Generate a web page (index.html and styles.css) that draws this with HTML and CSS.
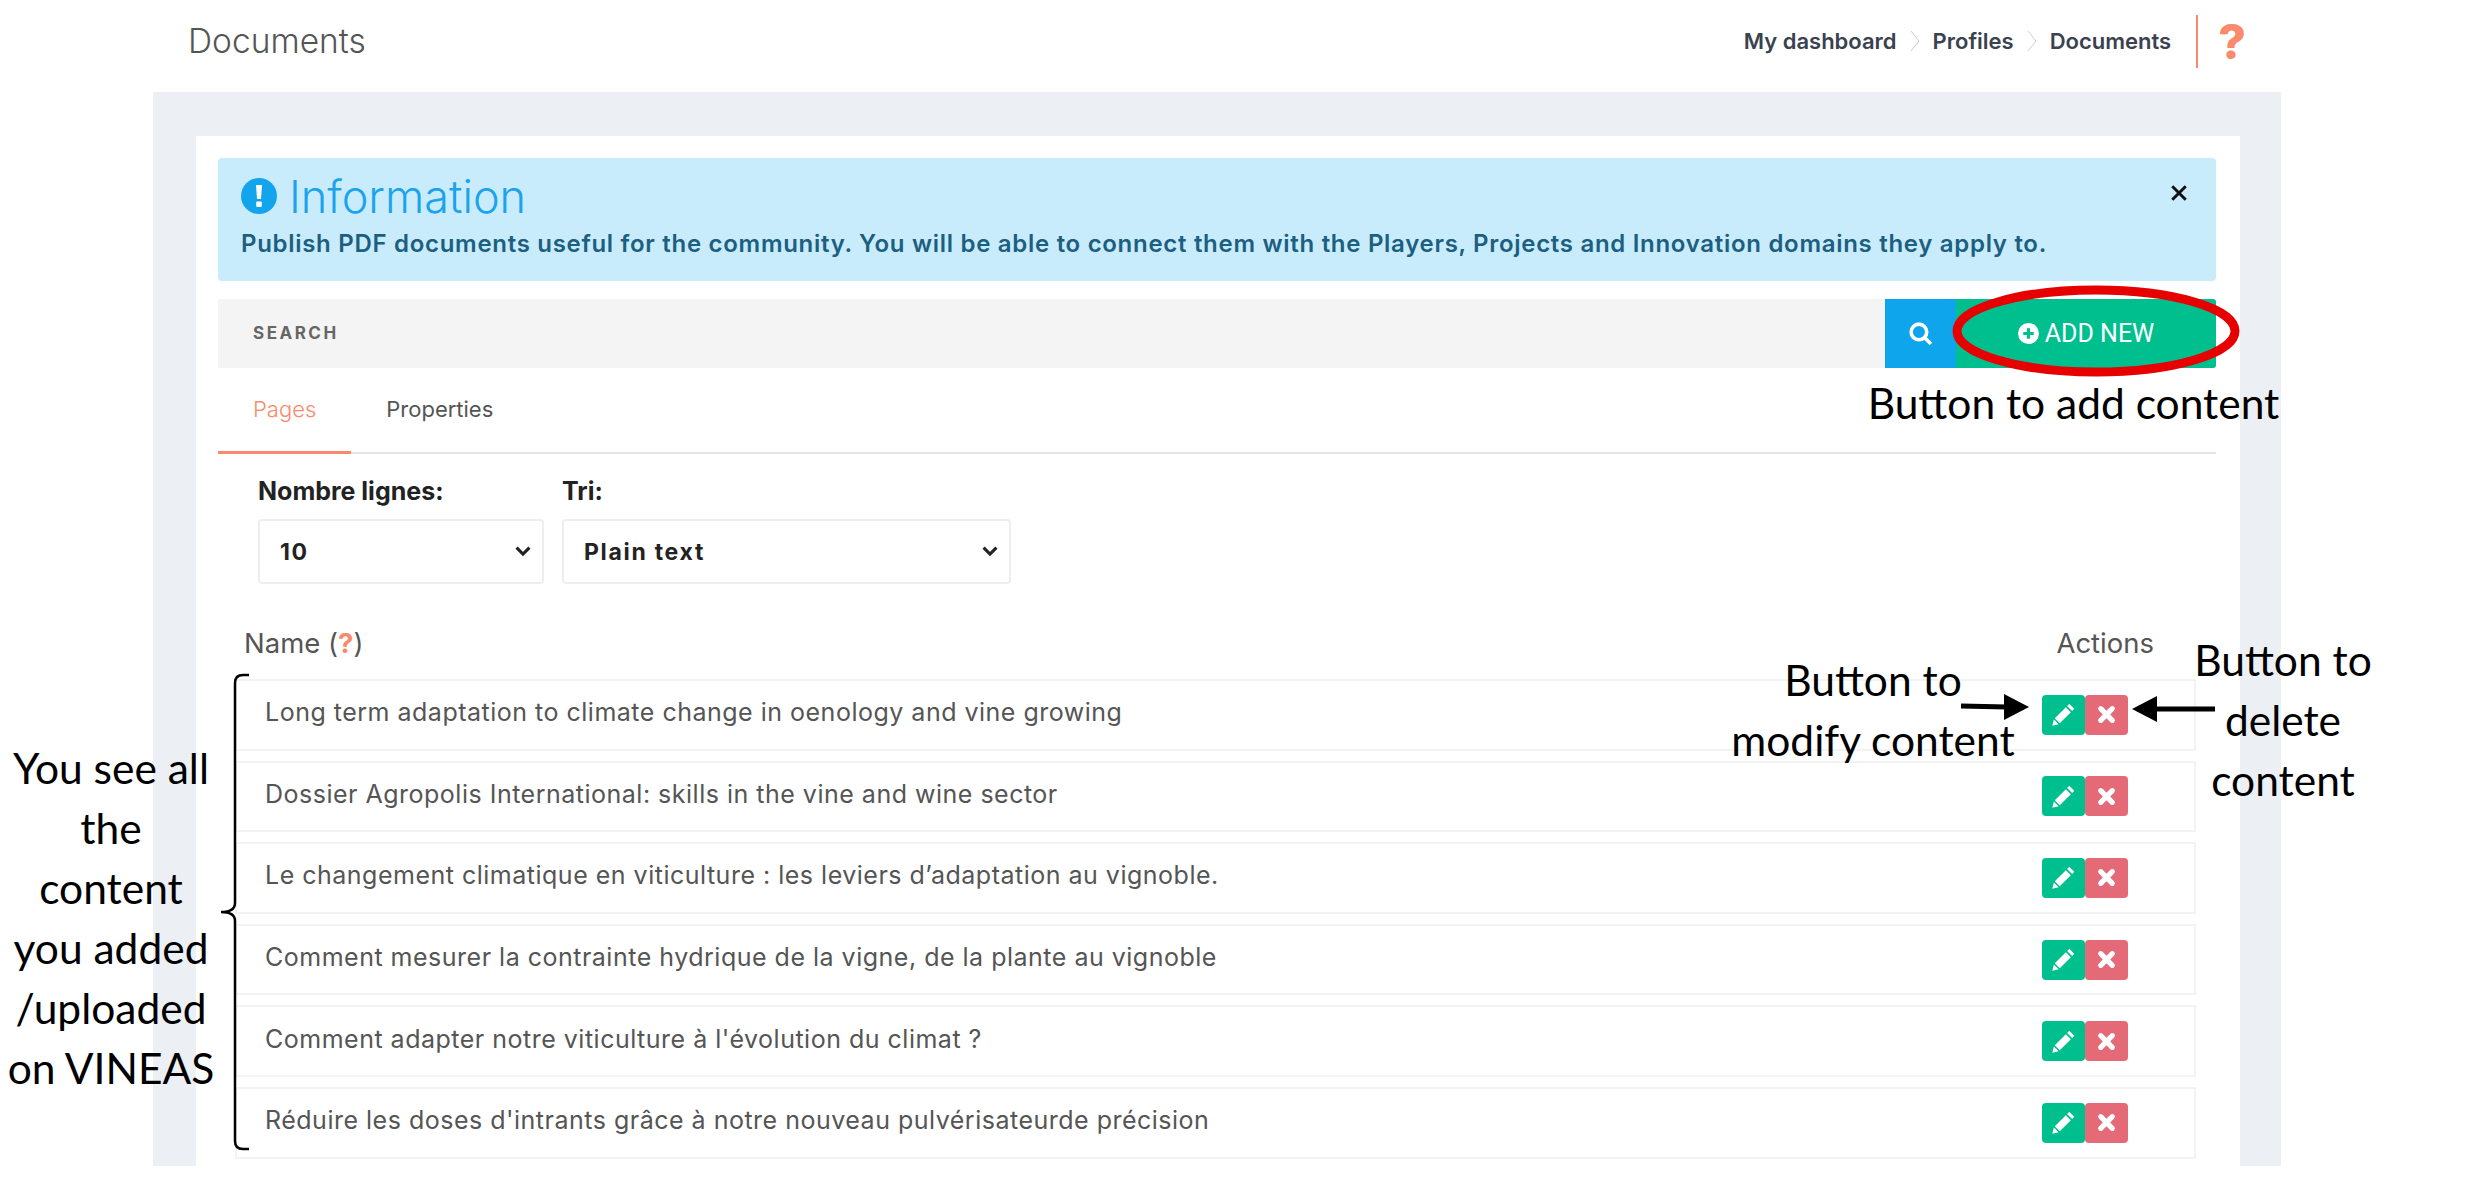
FILE: index.html
```html
<!DOCTYPE html>
<html lang="en">
<head>
    <meta charset="UTF-8">
    <meta name="viewport" content="width=device-width, initial-scale=1.0">
    <title>Documents</title>
    <link rel="stylesheet" href="styles.css">
</head>
<body>
    <header class="topbar">
        <div class="page-title">Documents</div>
        <nav class="breadcrumb">
            <span>My dashboard</span>
            <svg class="crumb-sep" viewBox="0 0 10 24"><path d="M1 2l8 10-8 10" /></svg>
            <span>Profiles</span>
            <svg class="crumb-sep" viewBox="0 0 10 24"><path d="M1 2l8 10-8 10" /></svg>
            <span>Documents</span>
            <span class="help-mark">?</span>
        </nav>
    </header>

    <main class="panel">
        <div class="card">
            <section class="alert">
                <div class="alert-head">
                    <svg class="alert-icon" viewBox="0 0 36 36">
                        <circle cx="18" cy="18" r="18" fill="#12a5ee" />
                        <path d="M15 7h6l-1 14h-4z" fill="#fff" />
                        <rect x="15.2" y="23.5" width="5.6" height="5.6" rx="1" fill="#fff" />
                    </svg>
                    <h2>Information</h2>
                    <svg class="alert-close" viewBox="0 0 16 16"><path d="M2 2l12 12M14 2L2 14" /></svg>
                </div>
                <p>Publish PDF documents useful for the community. You will be able to connect them with the Players, Projects and Innovation domains they apply to.</p>
            </section>

            <div class="searchbar">
                <div class="search-field">SEARCH</div>
                <div class="search-btn">
                    <svg viewBox="0 0 24 24"><circle cx="10.5" cy="10.5" r="7.5" /><path d="M16 16l6 6" /></svg>
                </div>
                <div class="add-btn">
                    <svg viewBox="0 0 20 20">
                        <circle cx="10" cy="10" r="10" fill="#fff" />
                        <path d="M10 5v10M5 10h10" stroke="#00bf8e" stroke-width="3" />
                    </svg>
                    ADD NEW
                </div>
            </div>

            <div class="tabs">
                <div class="tab tab-active">Pages</div>
                <div class="tab">Properties</div>
            </div>

            <div class="filters">
                <div class="filter filter-lines">
                    <label>Nombre lignes:</label>
                    <div class="select">
                        <span>10</span>
                        <svg viewBox="0 0 14 10"><path d="M2 2l5 5 5-5" /></svg>
                    </div>
                </div>
                <div class="filter filter-sort">
                    <label>Tri:</label>
                    <div class="select">
                        <span>Plain text</span>
                        <svg viewBox="0 0 14 10"><path d="M2 2l5 5 5-5" /></svg>
                    </div>
                </div>
            </div>

            <div class="list-head">
                <div>Name (<span class="hint">?</span>)</div>
                <div>Actions</div>
            </div>

            <div class="rows">
                <div class="row">
                    <span>Long term adaptation to climate change in oenology and vine growing</span>
                    <div class="actions">
                        <div class="btn-edit"><svg viewBox="0 0 20 20"><path d="M14.6 1.4l4 4-1.7 1.7-4-4zM11.9 4.1l4 4L7 17l-4-4zM2.3 13.9l3.8 3.8L1 19z" /></svg></div>
                        <div class="btn-del"><svg viewBox="0 0 20 20"><path d="M4.5 4.5l11 11M15.5 4.5l-11 11" /></svg></div>
                    </div>
                </div>
                <div class="row">
                    <span>Dossier Agropolis International: skills in the vine and wine sector</span>
                    <div class="actions">
                        <div class="btn-edit"><svg viewBox="0 0 20 20"><path d="M14.6 1.4l4 4-1.7 1.7-4-4zM11.9 4.1l4 4L7 17l-4-4zM2.3 13.9l3.8 3.8L1 19z" /></svg></div>
                        <div class="btn-del"><svg viewBox="0 0 20 20"><path d="M4.5 4.5l11 11M15.5 4.5l-11 11" /></svg></div>
                    </div>
                </div>
                <div class="row">
                    <span>Le changement climatique en viticulture : les leviers d’adaptation au vignoble.</span>
                    <div class="actions">
                        <div class="btn-edit"><svg viewBox="0 0 20 20"><path d="M14.6 1.4l4 4-1.7 1.7-4-4zM11.9 4.1l4 4L7 17l-4-4zM2.3 13.9l3.8 3.8L1 19z" /></svg></div>
                        <div class="btn-del"><svg viewBox="0 0 20 20"><path d="M4.5 4.5l11 11M15.5 4.5l-11 11" /></svg></div>
                    </div>
                </div>
                <div class="row">
                    <span>Comment mesurer la contrainte hydrique de la vigne, de la plante au vignoble</span>
                    <div class="actions">
                        <div class="btn-edit"><svg viewBox="0 0 20 20"><path d="M14.6 1.4l4 4-1.7 1.7-4-4zM11.9 4.1l4 4L7 17l-4-4zM2.3 13.9l3.8 3.8L1 19z" /></svg></div>
                        <div class="btn-del"><svg viewBox="0 0 20 20"><path d="M4.5 4.5l11 11M15.5 4.5l-11 11" /></svg></div>
                    </div>
                </div>
                <div class="row">
                    <span>Comment adapter notre viticulture à l'évolution du climat ?</span>
                    <div class="actions">
                        <div class="btn-edit"><svg viewBox="0 0 20 20"><path d="M14.6 1.4l4 4-1.7 1.7-4-4zM11.9 4.1l4 4L7 17l-4-4zM2.3 13.9l3.8 3.8L1 19z" /></svg></div>
                        <div class="btn-del"><svg viewBox="0 0 20 20"><path d="M4.5 4.5l11 11M15.5 4.5l-11 11" /></svg></div>
                    </div>
                </div>
                <div class="row">
                    <span>Réduire les doses d'intrants grâce à notre nouveau pulvérisateurde précision</span>
                    <div class="actions">
                        <div class="btn-edit"><svg viewBox="0 0 20 20"><path d="M14.6 1.4l4 4-1.7 1.7-4-4zM11.9 4.1l4 4L7 17l-4-4zM2.3 13.9l3.8 3.8L1 19z" /></svg></div>
                        <div class="btn-del"><svg viewBox="0 0 20 20"><path d="M4.5 4.5l11 11M15.5 4.5l-11 11" /></svg></div>
                    </div>
                </div>
            </div>
        </div>
    </main>

    <!-- callouts drawn on top of the screenshot -->
    <svg class="overlay" viewBox="0 0 2477 1183">
        <ellipse cx="2096" cy="331" rx="139" ry="41" fill="none" stroke="#e60000" stroke-width="9" />
        <path d="M249 675h-6q-8 0-8 8v220q0 9-14 9q14 0 14 9v220q0 8 8 8h6" fill="none" stroke="#000" stroke-width="2.5" />
        <path d="M1961 706l46 1" stroke="#000" stroke-width="5" />
        <path d="M2029 707l-25-13v26z" fill="#000" />
        <path d="M2215 709h-62" stroke="#000" stroke-width="5" />
        <path d="M2132 709l25-13v26z" fill="#000" />
    </svg>
    <div class="note note-add">Button to add content</div>
    <div class="note note-modify">Button to<br>modify content</div>
    <div class="note note-delete">Button to<br>delete<br>content</div>
    <div class="note note-list">You see all<br>the<br>content<br>you added<br>/uploaded<br>on VINEAS</div>
</body>
</html>
```

FILE: styles.css
```css
body {
    margin: 0;
    height: 1183px;
    overflow: hidden;
    position: relative;
    background: #fff;
    font-family: Inter, "Open Sans", sans-serif;
    color: #555;
}

.topbar {
    height: 92px;
    box-sizing: border-box;
    padding: 0 231px 10px 188px;
    display: flex;
    align-items: center;
    justify-content: space-between;
}
.page-title {
    font-size: 33.5px;
    font-weight: 300;
    color: #555;
}
.breadcrumb {
    display: flex;
    align-items: center;
    font-size: 22px;
    font-weight: 600;
    color: #3a4250;
}
.crumb-sep {
    width: 10px;
    height: 24px;
    margin: 0 13px;
    fill: none;
    stroke: #ccc;
    stroke-width: 1;
}
.help-mark {
    margin-left: 25px;
    height: 53px;
    padding-left: 20px;
    border-left: 2px solid #f98a6c;
    font-size: 48px;
    font-weight: 800;
    line-height: 53px;
    color: #f98a6c;
}

.panel {
    margin-left: 153px;
    width: 2128px;
    height: 1074px;
    box-sizing: border-box;
    padding: 44px 41px 0 43px;
    background: #ecf0f4;
}
.card {
    height: 100%;
    box-sizing: border-box;
    padding: 22px 24px 0 22px;
    background: #fff;
}

.alert {
    height: 123px;
    box-sizing: border-box;
    padding: 20px 23px 0;
    background: #c9ecfd;
    border-radius: 4px;
}
.alert-head {
    display: flex;
    align-items: center;
    height: 36px;
}
.alert-icon {
    width: 36px;
    height: 36px;
    margin-right: 12px;
}
.alert h2 {
    margin: 0;
    flex: 1;
    font-size: 45px;
    font-weight: 300;
    color: #1ba3ec;
}
.alert-close {
    width: 18px;
    height: 18px;
    margin: -6px 5px 0 0;
    fill: none;
    stroke: #111;
    stroke-width: 2.6;
}
.alert p {
    margin: 15px 0 0;
    font-size: 24px;
    font-weight: 600;
    letter-spacing: 0.7px;
    color: #1c5f80;
}

.searchbar {
    display: flex;
    height: 69px;
    margin-top: 18px;
}
.search-field {
    flex: 1;
    padding-left: 35px;
    line-height: 69px;
    background: #f4f4f4;
    font-size: 17px;
    font-weight: 700;
    letter-spacing: 2.5px;
    color: #666;
}
.search-btn {
    width: 71px;
    display: flex;
    align-items: center;
    justify-content: center;
    background: #0ea5ec;
}
.search-btn svg {
    width: 25px;
    height: 25px;
    fill: none;
    stroke: #fff;
    stroke-width: 3.4;
}
.add-btn {
    width: 260px;
    display: flex;
    align-items: center;
    justify-content: center;
    gap: 6px;
    background: #00bf8e;
    border-radius: 0 3px 3px 0;
    font-family: Roboto, sans-serif;
    font-size: 25px;
    color: #fff;
}
.add-btn svg {
    width: 21px;
    height: 21px;
}

.tabs {
    display: flex;
    height: 84px;
    border-bottom: 2px solid #e5e5e5;
}
.tab {
    padding: 28px 35px 0;
    font-size: 22px;
    color: #555;
}
.tab-active {
    margin-bottom: -2px;
    border-bottom: 3px solid #f98a6c;
    color: #f98a6c;
    font-weight: 300;
}

.filters {
    display: flex;
    gap: 18px;
    margin: 22px 0 0 40px;
}
.filter label {
    display: block;
    height: 43px;
    font-size: 25px;
    font-weight: 700;
    color: #222;
}
.filter-lines { width: 286px; }
.filter-sort { width: 449px; }
.select {
    height: 65px;
    box-sizing: border-box;
    padding: 0 10px 0 20px;
    display: flex;
    align-items: center;
    justify-content: space-between;
    border: 2px solid #eeeeee;
    border-radius: 4px;
    font-size: 23px;
    font-weight: 700;
    letter-spacing: 1.7px;
    color: #222;
}
.select svg {
    width: 18px;
    height: 13px;
    fill: none;
    stroke: #222;
    stroke-width: 2.4;
}

.list-head {
    display: flex;
    justify-content: space-between;
    margin: 45px 62px 0 26px;
    font-size: 27.5px;
    line-height: 29px;
    color: #555;
}
.hint {
    color: #f98a6c;
    font-weight: 700;
}

.rows {
    display: flex;
    flex-direction: column;
    gap: 10px;
    margin: 21px 20px 0 17px;
}
.row {
    height: 71.6px;
    box-sizing: border-box;
    padding: 0 66px 0 28px;
    display: flex;
    align-items: center;
    justify-content: space-between;
    border: 2px solid #f3f3f3;
    font-size: 25px;
    letter-spacing: 0.5px;
    color: #555;
}
.row span {
    margin-bottom: 5px;
}
.actions {
    display: flex;
}
.btn-edit, .btn-del {
    width: 43px;
    height: 40px;
    display: flex;
    align-items: center;
    justify-content: center;
    border-radius: 4px;
}
.btn-edit {
    background: #00bf8e;
}
.btn-edit svg {
    width: 25px;
    height: 25px;
    fill: #fff;
}
.btn-del {
    background: #e56a78;
}
.btn-del svg {
    width: 21px;
    height: 21px;
    fill: none;
    stroke: #fff;
    stroke-width: 5;
    stroke-linecap: round;
}

/* callouts */
.overlay {
    position: absolute;
    left: 0;
    top: 0;
    width: 2477px;
    height: 1183px;
    pointer-events: none;
}
.note {
    position: absolute;
    font-family: Lato, sans-serif;
    font-size: 42.5px;
    line-height: 60px;
    color: #000;
    text-align: center;
    white-space: nowrap;
}
.note-add { left: 1867px; top: 373px; width: 413px; }
.note-modify { left: 1723px; top: 650px; width: 300px; }
.note-delete { left: 2133px; top: 630px; width: 300px; }
.note-list { left: 0; top: 738px; width: 222px; }
```
